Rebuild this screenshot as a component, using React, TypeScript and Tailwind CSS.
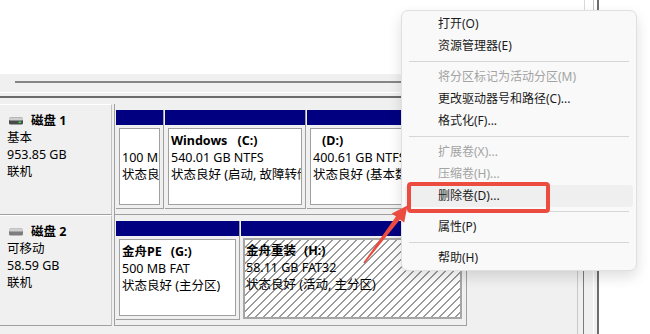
import React from "react";

function DiskIcon({ green }: { green?: boolean }) {
  return (
    <svg width="14" height="8" viewBox="0 0 14 8" className="ml-[2px] shrink-0">
      <rect x="0" y="0.5" width="14" height="7" rx="1.5" fill={green ? "#4a4a4a" : "#7d7d7d"} />
      <rect x="0" y="0.5" width="14" height="3" rx="1.2" fill="#cfcfcf" />
      {green ? <rect x="9.5" y="4.5" width="2.5" height="1.6" fill="#39d04a" /> : null}
    </svg>
  );
}

function Label({ icon, name, lines }: { icon: React.ReactNode; name: string; lines: string[] }) {
  return (
    <div className="w-[112px] h-full shrink-0 border-t border-t-white border-r border-r-[#c2c2c2] border-b border-b-[#a0a0a0] pt-[7px] pl-[7px]">
      <div className="flex items-center h-[17px]">
        {icon}
        <span className="ml-[8px] font-bold leading-[17px]">{name}</span>
      </div>
      {lines.map((l) => (
        <div key={l} className="h-[17px] leading-[17px]">
          {l}
        </div>
      ))}
    </div>
  );
}

function Part({
  w,
  lines,
  bold,
  boldSuffix,
  gap,
  noBorder,
}: {
  w?: string;
  lines: string[];
  bold?: string;
  boldSuffix?: string;
  gap?: string;
  noBorder?: boolean;
}) {
  return (
    <div className={(w ? w : "flex-1 min-w-0") + " h-[99px] flex flex-col " + (noBorder ? "" : "border-r border-r-[#a0a0a0]")}>
      <div className="h-[15px] bg-[#000080] shrink-0" />
      <div className="flex-1 p-[3px] border-b border-b-[#a0a0a0] min-h-0">
        <div className="h-full border border-[#a0a0a0] bg-white pl-[2px] pt-[3px] overflow-hidden whitespace-nowrap">
          <div className="h-[17px] leading-[17px] font-bold">
            {bold}
            {boldSuffix ? <span className={gap}>{boldSuffix}</span> : null}
          </div>
          {lines.map((l) => (
            <div key={l} className="h-[17px] leading-[17px]">
              {l}
            </div>
          ))}
        </div>
      </div>
    </div>
  );
}

function MenuItem({ text, disabled, hover }: { text: string; disabled?: boolean; hover?: boolean }) {
  return (
    <div
      className={
        "h-[22px] mx-[3px] rounded-[4px] flex items-center pl-[33px] whitespace-nowrap " +
        (disabled ? "text-[#a3a3a3] " : "text-[#1b1b1b] ") +
        (hover ? "bg-[#efefef]" : "")
      }
    >
      {text}
    </div>
  );
}

function Sep() {
  return <div className="mx-[7px] mt-[4px] mb-[4px] h-[1px] bg-[#d6d6d6]" />;
}

export default function App() {
  return (
    <div className="relative w-[650px] h-[334px] overflow-hidden bg-white text-[12px] text-black font-['Noto_Sans','Noto_Sans_CJK_SC',sans-serif]">
      <div className="w-[599px] h-full flex flex-col border-r-2 border-r-[#6e6e6e]">
        {/* top pane */}
        <div className="h-[74px] flex shrink-0">
          <div className="w-[584px] bg-white" />
          <div className="w-[1px] bg-[#d9d9d9]" />
          <div className="w-[8px] bg-white" />
          <div className="w-[1px] bg-[#c4c4c4]" />
          <div className="flex-1 bg-white" />
        </div>
        {/* scroll band + splitter */}
        <div className="h-[30px] bg-[#f0f0f0] shrink-0 flex flex-col">
          <div className="mt-[7px] ml-[15px] w-[545px] h-[2px] bg-[#858585]" />
          <div className="mt-[9px] h-[1px] bg-white" />
          <div className="mt-[3px] h-[2px] bg-[#6b6b6b]" />
        </div>
        {/* bottom pane */}
        <div className="flex-1 bg-[#f0f0f0] flex text-[12.5px]">
          <div className="w-[577px] flex flex-col">
            <div className="flex h-[111px]">
              <Label icon={<DiskIcon green />} name="磁盘 1" lines={["基本", "953.85 GB", "联机"]} />
              <div className="ml-[2px] w-[353px] h-full border-l border-r border-b border-[#a0a0a0] pt-[6px] pl-[1px] flex gap-[1px]">
                <Part w="w-[48px]" lines={["100 MB", "状态良好 (EFI 系统分区)"]} />
                <Part
                  w="w-[141px]"
                  bold="Windows"
                  boldSuffix="(C:)"
                  gap="ml-[10px]"
                  lines={["540.01 GB NTFS", "状态良好 (启动, 故障转储, 基本数据分区)"]}
                />
                <Part
                  bold=""
                  boldSuffix="(D:)"
                  gap="ml-[9px]"
                  noBorder
                  lines={["400.61 GB NTFS", "状态良好 (基本数据分区)"]}
                />
              </div>
            </div>
            <div className="flex h-[111px]">
              <Label icon={<DiskIcon />} name="磁盘 2" lines={["可移动", "58.59 GB", "联机"]} />
              <div className="ml-[2px] w-[353px] h-full border-l border-r border-b border-[#a0a0a0] pt-[6px] pl-[1px] flex gap-[1px]">
                <Part w="w-[124px]" bold="金舟PE" boldSuffix="(G:)" gap="ml-[9px]" lines={["500 MB FAT", "状态良好 (主分区)"]} />
                <div className="flex-1 h-[99px] flex flex-col">
                  <div className="h-[15px] bg-[#000080] shrink-0" />
                  <div className="flex-1 pt-[2px] pl-[2px] pr-[4px] pb-[1px] min-h-0">
                    <div className="h-full border-2 border-[#a6a6a6] pl-[1px] pt-[2px] overflow-hidden whitespace-nowrap bg-[repeating-linear-gradient(135deg,#ffffff_0px,#ffffff_4.6px,#9a9a9a_4.6px,#9a9a9a_5.66px)]">
                      <div className="h-[17px] leading-[17px] font-bold">
                        金舟重装<span className="ml-[8px]">(H:)</span>
                      </div>
                      <div className="h-[17px] leading-[17px]">58.11 GB FAT32</div>
                      <div className="h-[17px] leading-[17px]">状态良好 (活动, 主分区)</div>
                    </div>
                  </div>
                </div>
              </div>
            </div>
          </div>
          <div className="w-[1px] bg-[#c8c8c8]" />
          <div className="w-[5px]" />
          <div className="w-[1px] bg-[#7c7c7c]" />
          <div className="w-[9px]" />
          <div className="w-[1px] bg-white" />
          <div className="flex-1" />
        </div>
      </div>

      {/* context menu */}
      <div className="absolute left-[401px] top-[10px] w-[236px] h-[261px] bg-[#f9f9f9] border border-[#e0e0e0] rounded-[7px] shadow-[0_6px_14px_rgba(0,0,0,0.13)] pt-[2px] pb-[1px]">
        <MenuItem text="打开(O)" />
        <MenuItem text="资源管理器(E)" />
        <Sep />
        <MenuItem text="将分区标记为活动分区(M)" disabled />
        <MenuItem text="更改驱动器号和路径(C)..." />
        <MenuItem text="格式化(F)..." />
        <Sep />
        <MenuItem text="扩展卷(X)..." disabled />
        <MenuItem text="压缩卷(H)..." disabled />
        <MenuItem text="删除卷(D)..." hover />
        <Sep />
        <MenuItem text="属性(P)" />
        <Sep />
        <MenuItem text="帮助(H)" />
      </div>

      {/* annotation: red box */}
      <div className="absolute left-[407px] top-[182px] w-[143px] h-[31px] border-4 border-[#ec4b3f] rounded-[4px]" />
      {/* annotation: arrow */}
      <svg className="absolute left-0 top-0 pointer-events-none" width="650" height="334" viewBox="0 0 650 334">
        <polygon
          points="363.4,262.6 396.0,216.5 391.8,213.4 407.5,205.5 404.2,222.6 400.0,219.5 364.6,263.4"
          fill="#ec4b3f"
        />
      </svg>
    </div>
  );
}
